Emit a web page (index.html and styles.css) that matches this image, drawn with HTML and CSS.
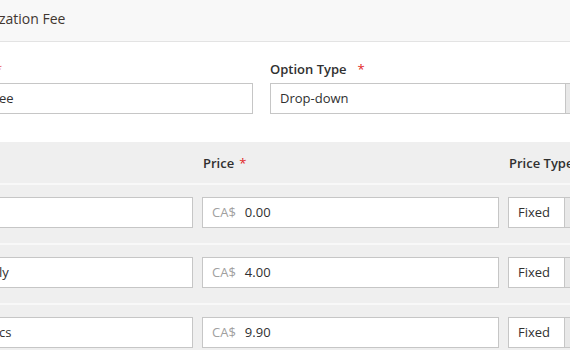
FILE: index.html
```html
<!DOCTYPE html>
<html>
<head>
<meta charset="utf-8">
<link rel="stylesheet" href="styles.css">
</head>
<body>
<div class="section-head"><span class="section-title">zation Fee</span></div>

<div class="fields">
  <div class="field field-title">
    <div class="label"><span class="req req-cut">*</span></div>
    <div class="control input">ee</div>
  </div>
  <div class="field field-type">
    <div class="label">Option Type<span class="req">*</span></div>
    <div class="control select"><span class="sel-text">Drop-down</span><span class="sel-btn"></span></div>
  </div>
</div>

<div class="values">
  <div class="vrow vhead">
    <div class="cell"></div>
    <div class="cell head">Price<span class="req req-small">*</span></div>
    <div class="cell head">Price Type</div>
  </div>
  <div class="vrow">
    <div class="control input"></div>
    <div class="control input price"><span class="cur">CA$</span>0.00</div>
    <div class="control select"><span class="sel-text">Fixed</span><span class="sel-btn"></span></div>
  </div>
  <div class="vrow">
    <div class="control input">ly</div>
    <div class="control input price"><span class="cur">CA$</span>4.00</div>
    <div class="control select"><span class="sel-text">Fixed</span><span class="sel-btn"></span></div>
  </div>
  <div class="vrow">
    <div class="control input">cs</div>
    <div class="control input price"><span class="cur">CA$</span>9.90</div>
    <div class="control select"><span class="sel-text">Fixed</span><span class="sel-btn"></span></div>
  </div>
</div>
</body>
</html>
```
FILE: styles.css
```css
* { box-sizing: border-box; }

body {
  margin: 0;
  width: 570px;
  height: 350px;
  overflow: hidden;
  background: #ffffff;
  font-family: "Open Sans", "Liberation Sans", sans-serif;
  font-size: 13px;
  color: #303030;
}

.section-head {
  height: 42px;
  background: #f8f8f8;
  border-bottom: 1px solid #e3e3e3;
  display: flex;
  align-items: center;
  padding-bottom: 5px;
}

.section-title {
  font-size: 14px;
  color: #41362f;
  margin-left: -1px;
}

.fields {
  display: flex;
  gap: 17px;
  padding-top: 18px;
  margin-left: -11px;
}

.field-title { width: 264px; flex: none; }
.field-type { width: 330px; flex: none; }

.label {
  height: 18px;
  line-height: 18px;
  font-weight: 600;
  margin-bottom: 5px;
  white-space: nowrap;
}

.req {
  color: #e22626;
  font-weight: 400;
  margin-left: 11px;
}

.req-cut { margin-left: 0; position: relative; left: 6px; opacity: 0.7; }
.req-small { margin-left: 5px; }

.control {
  height: 31px;
  border: 1px solid #c6c6c6;
  background: #ffffff;
  display: flex;
  align-items: center;
  padding: 0 9px 1px;
  white-space: nowrap;
}

.select {
  padding: 0;
  overflow: hidden;
}

.sel-text {
  flex: none;
  padding-left: 9px;
  padding-bottom: 1px;
}

.field-type .sel-text { width: 294px; }

.sel-btn {
  width: 32px;
  height: 100%;
  flex: none;
  background: #e8e8e8;
  border-left: 1px solid #c6c6c6;
}

.values {
  margin-top: 28px;
  margin-left: -11px;
  background: #efefef;
}

.vrow {
  display: grid;
  grid-template-columns: 204px 297px 90px;
  column-gap: 9px;
  border-top: 2px solid #f8f8f8;
  padding: 12px 0 15px;
}

.vrow.vhead {
  border-top: 0;
  padding: 0;
  height: 41px;
  align-items: center;
}

.head {
  font-weight: 600;
  padding-left: 1px;
  white-space: nowrap;
}

.vrow .select .sel-text { width: 55px; }

.cur {
  color: #a0a0a0;
  margin-right: 9px;
}
```
